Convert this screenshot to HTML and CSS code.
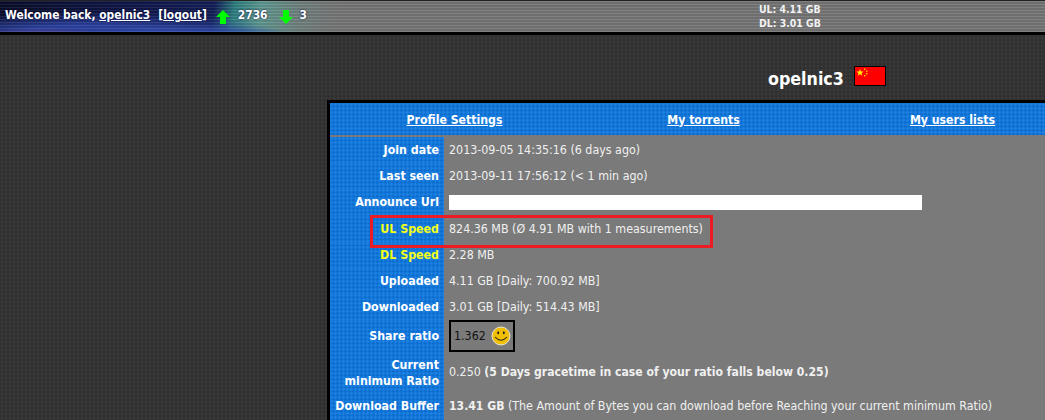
FILE: index.html
```html
<!DOCTYPE html>
<html lang="en">
<head>
<meta charset="utf-8">
<title>opelnic3</title>
<link rel="stylesheet" href="styles.css">
</head>
<body>
<header class="topbar">
  <div class="welcome">
    <span>Welcome back, <a href="#">opelnic3</a></span>
    <span class="logout">[<a href="#">logout</a>]</span>
    <svg class="arrow up" width="16" height="16" viewBox="0 0 16 16"><polygon points="8,1 15,8 11,8 11,15 5,15 5,8 1,8" fill="#00ff00"/></svg>
    <span class="count">2736</span>
    <svg class="arrow down" width="16" height="16" viewBox="0 0 16 16"><polygon points="8,15 15,8 11,8 11,1 5,1 5,8 1,8" fill="#00ff00"/></svg>
    <span class="count">3</span>
  </div>
  <div class="traffic">
    <div>UL: 4.11 GB</div>
    <div>DL: 3.01 GB</div>
  </div>
</header>

<div class="userline">
  <h1 class="username">opelnic3</h1>
  <svg class="flag" width="32" height="20" viewBox="0 0 32 20">
    <rect x="0.5" y="0.5" width="31" height="19" fill="#ff0000" stroke="#000"/>
    <polygon points="6,3 7,5.6 9.6,5.6 7.5,7.2 8.3,9.8 6,8.2 3.7,9.8 4.5,7.2 2.4,5.6 5,5.6" fill="#ffee00"/>
    <rect x="10" y="2.5" width="1.4" height="1.4" fill="#ffcc00"/>
    <rect x="12" y="4.5" width="1.4" height="1.4" fill="#ffcc00"/>
    <rect x="12" y="7" width="1.4" height="1.4" fill="#ffcc00"/>
    <rect x="10" y="9" width="1.4" height="1.4" fill="#ffcc00"/>
  </svg>
</div>

<main class="panel">
  <nav class="tabs">
    <a href="#">Profile Settings</a>
    <a href="#">My torrents</a>
    <a href="#">My users lists</a>
  </nav>
  <div class="info">
    <div class="label">Join date</div><div class="value">2013-09-05 14:35:16 (6 days ago)</div>
    <div class="label">Last seen</div><div class="value">2013-09-11 17:56:12 (&lt; 1 min ago)</div>
    <div class="label">Announce Url</div><div class="value"><div class="url"></div></div>
    <div class="label hot">UL Speed</div><div class="value">824.36 MB (Ø 4.91 MB with 1 measurements)</div>
    <div class="label hot">DL Speed</div><div class="value">2.28 MB</div>
    <div class="label">Uploaded</div><div class="value">4.11 GB [Daily: 700.92 MB]</div>
    <div class="label">Downloaded</div><div class="value">3.01 GB [Daily: 514.43 MB]</div>
    <div class="label tight">Share ratio</div>
    <div class="value tight">
      <div class="ratio">
        <span>1.362</span>
        <svg width="20" height="20" viewBox="0 0 20 20">
          <circle cx="10" cy="10" r="9" fill="#f0c000" stroke="#e8e4d0" stroke-width="1"/>
          <ellipse cx="7.200" cy="6.800" rx="1" ry="1.500" fill="#222"/>
          <ellipse cx="12.800" cy="6.800" rx="1" ry="1.500" fill="#222"/>
          <path d="M4 11 Q10 17.500 16 11" fill="none" stroke="#222" stroke-width="1.100"/>
        </svg>
      </div>
    </div>
    <div class="label double">Current<br>minimum Ratio</div>
    <div class="value double"><span>0.250 <b>(5 Days gracetime in case of your ratio falls below 0.25)</b></span></div>
    <div class="label last">Download Buffer</div>
    <div class="value last"><span><b>13.41 GB</b> (The Amount of Bytes you can download before Reaching your current minimum Ratio)</span></div>
  </div>
  <div class="highlight"></div>
</main>
</body>
</html>
```

FILE: styles.css
```css
* { box-sizing: border-box; }

html, body {
  height: 420px;
  overflow: hidden;
}

body {
  margin: 0;
  font-family: "DejaVu Sans Condensed", "DejaVu Sans", Verdana, sans-serif;
  font-size: 12px;
  color: #fff;
  background-color: #323232;
  background-image:
    radial-gradient(circle at 2px 2px, #3a3a3a 0, #3a3a3a 1px, transparent 1.5px),
    radial-gradient(circle at 0 0, #2c2c2c 0, #2c2c2c 1px, transparent 1.5px);
  background-size: 4px 4px;
}

a { color: #fff; }

.topbar {
  display: flex;
  height: 35px;
  border-top: 1px solid #222;
  border-bottom: 3px solid #000;
  background-image:
    repeating-linear-gradient(to bottom, rgba(255,255,255,.07) 0 1px, rgba(0,0,0,.08) 1px 3px),
    radial-gradient(ellipse 70px 6px at 40px 33px, rgba(120,70,130,.55), transparent),
    radial-gradient(ellipse 110px 12px at 190px 35px, rgba(52,78,175,.95) 30%, transparent),
    radial-gradient(ellipse 190px 20px at 90px 31px, rgba(45,68,165,.95) 35%, transparent),
    linear-gradient(100deg, #0a0e2a 0, #10184a 130px, #141f58 212px, #2f7f80 232px, #5f9a92 258px, #70827f 295px, #777 335px);
}

.welcome {
  display: flex;
  align-items: center;
  width: 759px;
  padding: 0 0 3px 5px;
  font-weight: 700;
  font-size: 11.9px;
  white-space: nowrap;
  text-shadow: 0 0 2px #003;
}

.logout { margin-left: 8px; }

.arrow { margin: 3px 5px 0 8px; }
.arrow.down { margin: 3px 4px 0 10px; }

.count { margin-left: 2px; }

.traffic {
  padding-top: 1px;
  font-weight: 700;
  font-size: 10.4px;
  line-height: 14px;
  color: #f2f2f2;
}

.userline {
  display: flex;
  align-items: flex-start;
  height: 65px;
  padding: 31px 0 0 768px;
}

.username {
  margin: 3px 10px 0 0;
  font-size: 17.7px;
  line-height: 20px;
  font-weight: 700;
}

.panel {
  position: relative;
  width: 753px;
  margin-left: 327px;
  border: solid #000;
  border-width: 3px 3px 0;
  background: #7a7a7a;
}

.tabs, .label {
  background-color: #0f74d8;
  background-image:
    radial-gradient(circle at 1.5px 1.5px, #1f80e0 0, #1f80e0 1px, transparent 1.5px),
    radial-gradient(circle at 3.5px 3.5px, #0d6ccc 0, #0d6ccc 1px, transparent 1.5px);
  background-size: 4px 4px;
}

.tabs {
  display: grid;
  grid-template-columns: repeat(3, 1fr);
  height: 32px;
  margin-bottom: 2px;
  padding-top: 1px;
  align-items: center;
  justify-items: center;
  font-weight: 700;
  font-size: 12.2px;
}

.info {
  display: grid;
  grid-template-columns: 114px 1fr;
}

.label {
  padding: 6px 5px 6px 0;
  line-height: 14px;
  text-align: right;
  font-weight: 700;
  font-size: 12.3px;
}

.hot { color: #f4ff1a; }

.value {
  display: flex;
  align-items: center;
  gap: 4px;
  padding: 6px 5px;
  line-height: 14px;
  font-size: 12.35px;
  color: #f0f0f0;
  white-space: pre;
}

.value b { font-size: 12.1px; }

.url {
  width: 473px;
  height: 15px;
  background: #fff;
}

.tight { padding-top: 0; padding-bottom: 0; }
.label.tight { display: flex; align-items: center; justify-content: flex-end; padding-right: 5px; }

.ratio {
  display: flex;
  align-items: center;
  gap: 5px;
  height: 32px;
  padding: 0 0 0 3px;
  width: 66px;
  border: 2px solid #000;
  color: #111;
}

.double { padding-top: 6px; padding-bottom: 6px; }
.label.double { line-height: 16px; padding-top: 5px; padding-bottom: 3px; }

.last { padding-top: 7px; padding-bottom: 7px; }

.highlight {
  position: absolute;
  left: 40px;
  top: 112px;
  width: 343px;
  height: 33px;
  border: 3px solid #ed1c24;
}
```
